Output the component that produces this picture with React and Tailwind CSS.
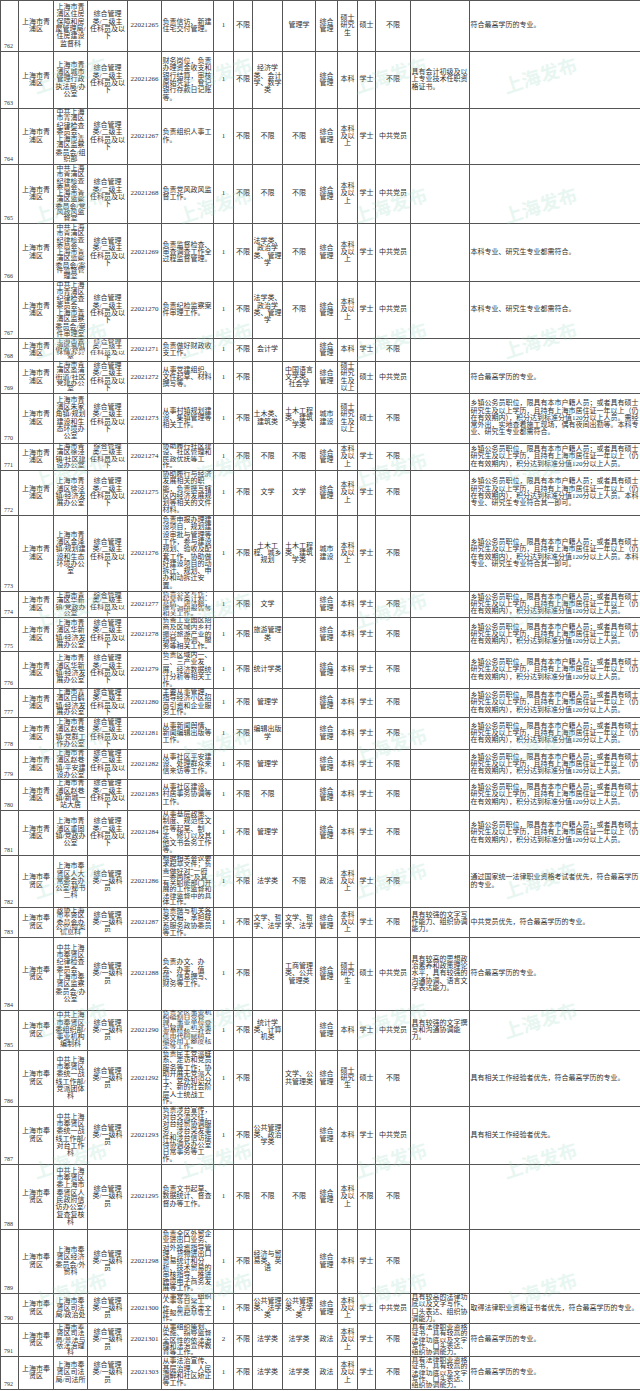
import React, { useLayoutEffect, useRef, useState } from "react";

const QP = "上海市青浦区";
const FX = "上海市奉贤区";
const JW = "中共上海市青浦区纪律检查委员会、上海市青浦区监察委员会/";
const S =
  "乡镇公务员职位，限具有本市户籍人员；或者具有硕士研究生及以上学历，且持有上海市居住证一年以上（仍在有效期内），积分达到标准分值120分以上人员。";
const S1 = S + "本科专业、研究生专业符合其一即可。";
const FL = "具有法律职业资格证书，具有较高的法律功底以及文字写作、口头表达、组织协调能力。";

// h = row height in px, read off the screenshot
const rows = [
  { n: 762, h: 51, d: QP, u: "上海市青浦区住房保障和房屋管理局/住房建设监督科", c: "22021265", desc: "负责信访、新建住宅交付管理。", m1: "", m2: "管理学", cat: "综合管理", edu: "硕士研究生", deg: "硕士", pol: "不限", o: "", r: "符合最高学历的专业。" },
  { n: 763, h: 57, d: QP, u: "上海市青浦区城市管理行政执法局/办公室", c: "22021266", desc: "财务岗位，负责办理资金收支和银行结算，审核原始凭证，登记银行存款日记账等。", m1: "经济学类、会计学、数学类", m2: "", cat: "综合管理", edu: "本科", deg: "学士", pol: "不限", o: "具有会计初级及以上专业技术任职资格证书。", r: "" },
  { n: 764, h: 56, d: QP, u: JW + "组织部", c: "22021267", desc: "负责组织人事工作。", m1: "不限", m2: "不限", cat: "综合管理", edu: "本科及以上", deg: "学士", pol: "中共党员", o: "", r: "" },
  { n: 765, h: 59, d: QP, u: JW + "党风政风监督室", c: "22021268", desc: "负责党风政风监督工作。", m1: "不限", m2: "不限", cat: "综合管理", edu: "本科及以上", deg: "学士", pol: "中共党员", o: "", r: "" },
  { n: 766, h: 58, d: QP, u: JW + "案件监督管理室", c: "22021269", desc: "负责监督检查、审查调查工作全过程监督管理。", m1: "法学类、政治学类、管理学", m2: "不限", cat: "综合管理", edu: "本科及以上", deg: "学士", pol: "中共党员", o: "", r: "本科专业、研究生专业都需符合。" },
  { n: 767, h: 57, d: QP, u: JW + "案件审理室", c: "22021270", desc: "负责纪检监察案件审理工作。", m1: "法学类、政治学类、管理学", m2: "不限", cat: "综合管理", edu: "本科及以上", deg: "学士", pol: "中共党员", o: "", r: "本科专业、研究生专业都需符合。" },
  { n: 768, h: 23, d: QP, u: "上海市青浦区夏阳街道/营商环境办公室", c: "22021271", desc: "负责做好财政收支工作。", m1: "会计学", m2: "", cat: "综合管理", edu: "本科", deg: "学士", pol: "不限", o: "", r: "" },
  { n: 769, h: 32, d: QP, u: "上海市青浦区盈浦街道/社区党建办公室", c: "22021272", desc: "从事党建组织、文件起草、材料撰写等。", m1: "", m2: "中国语言文学类、社会学", cat: "综合管理", edu: "硕士研究生及以上", deg: "硕士", pol: "中共党员", o: "", r: "符合最高学历的专业。" },
  { n: 770, h: 50, d: QP, u: "上海市青浦区朱家角镇/规划建设和生态环境办公室", c: "22021273", desc: "从事村镇规划建设、集镇管理等相关工作。", m1: "土木类、建筑类", m2: "土木工程类、建筑学类", cat: "城市建设", edu: "硕士研究生及以上", deg: "硕士", pol: "不限", o: "", r: S + "需经常外出，实地查看施工现场，偶有夜间出勤等。本科专业、研究生专业都需符合。" },
  { n: 771, h: 27, d: QP, u: "上海市青浦区徐泾镇/社区建设办公室", c: "22021274", desc: "协助履行社区建设、社区管理和民政优抚等工作。", m1: "不限", m2: "不限", cat: "综合管理", edu: "本科及以上", deg: "学士", pol: "不限", o: "", r: S },
  { n: 772, h: 45, d: QP, u: "上海市青浦区徐泾镇/经济发展办公室", c: "22021275", desc: "协助履行与经济发展相关的职能，负责撰写辖区内经济发展规划等相关的文件材料。", m1: "文学", m2: "文学", cat: "综合管理", edu: "本科及以上", deg: "学士", pol: "不限", o: "", r: S1 },
  { n: 773, h: 76, d: QP, u: "上海市青浦区金泽镇/规划建设和生态环境办公室", c: "22021276", desc: "负责申报办理建设项目，规划建设审批与管理等工作，参与建设规划、验收及配套工作，协助做好建设项目的动拆迁、规划、申办和动拆迁安置。", m1: "土木工程、城乡规划", m2: "土木工程类、建筑学类", cat: "城市建设", edu: "本科及以上", deg: "学士", pol: "不限", o: "", r: S1 },
  { n: 774, h: 26, d: QP, u: "上海市青浦区华新镇/党政办公室", c: "22021277", desc: "负责公文写作；起草各类计划、总结、讲话稿，撰写调研报告等相关工作。", m1: "文学", m2: "", cat: "综合管理", edu: "本科", deg: "学士", pol: "不限", o: "", r: S },
  { n: 775, h: 34, d: QP, u: "上海市青浦区华新镇/经济发展办公室", c: "22021278", desc: "负责工业园区招商及区域内乡村振兴旅游产业的指导、协调、服务等相关工作。", m1: "旅游管理类", m2: "", cat: "综合管理", edu: "本科", deg: "学士", pol: "不限", o: "", r: S },
  { n: 776, h: 37, d: QP, u: "上海市青浦区华新镇/经济发展办公室", c: "22021279", desc: "负责区域内一、二、三产业发展，经济数据统计分析等相关工作。", m1: "统计学类", m2: "", cat: "综合管理", edu: "本科", deg: "学士", pol: "不限", o: "", r: S },
  { n: 777, h: 29, d: QP, u: "上海市青浦区白鹤镇/经济发展办公室", c: "22021280", desc: "主要从事管理，指导经济小区招商引资和企业服务工作。", m1: "管理学", m2: "", cat: "综合管理", edu: "本科", deg: "学士", pol: "不限", o: "", r: S },
  { n: 778, h: 32, d: QP, u: "上海市青浦区赵巷镇/党群工作办公室", c: "22021281", desc: "从事新闻舆情、新闻编辑出版等工作。", m1: "编辑出版学", m2: "", cat: "综合管理", edu: "本科", deg: "学士", pol: "不限", o: "", r: S },
  { n: 779, h: 30, d: QP, u: "上海市青浦区赵巷镇/平安建设办公室", c: "22021282", desc: "从事社区平安建设、处理群众来信来访等工作。", m1: "管理学", m2: "", cat: "综合管理", edu: "本科", deg: "学士", pol: "不限", o: "", r: S },
  { n: 780, h: 31, d: QP, u: "上海市青浦区赵巷镇/新城一站大居", c: "22021283", desc: "从事社区建设、村居事务协调等工作。", m1: "不限", m2: "", cat: "综合管理", edu: "本科", deg: "学士", pol: "不限", o: "", r: S },
  { n: 781, h: 45, d: QP, u: "上海市青浦区重固镇/党政办公室", c: "22021284", desc: "从事基层政策、制度、规范性文件等起草、制定、修订以及其他文书会务工作等。", m1: "管理学", m2: "", cat: "综合管理", edu: "本科", deg: "学士", pol: "不限", o: "", r: S },
  { n: 782, h: 52, d: FX, u: "上海市奉贤区人大常委会办公室/秘书二科", c: "22021286", desc: "根据相关会议要求起草文件；负责做好对“一府一委两院”及其有关职能部门开展的工作监督和法律监督中的具体工作。", m1: "法学类", m2: "不限", cat: "政法", edu: "本科及以上", deg: "学士", pol: "不限", o: "", r: "通过国家统一法律职业资格考试者优先，符合最高学历的专业。" },
  { n: 783, h: 30, d: FX, u: "政协上海市奉贤区委员会办公室/提案信息科", c: "22021287", desc: "负责撰写机关各类文稿，承担联系服务政协委员等工作。", m1: "文学、哲学、法学", m2: "文学、哲学、法学", cat: "综合管理", edu: "本科及以上", deg: "学士", pol: "不限", o: "具有较强的文字写作能力、组织协调能力。", r: "中共党员优先，符合最高学历的专业。" },
  { n: 784, h: 73, d: FX, u: "中共上海市奉贤区纪律检查委员会、上海市奉贤区监察委员会/办公室", c: "22021288", desc: "负责办文、办会、办事，值班、信息撰写、财务等工作。", m1: "", m2: "工商管理类、公共管理类", cat: "综合管理", edu: "硕士研究生", deg: "硕士", pol: "中共党员", o: "具有较高的思想政治素养和政策理论水平，具有较强的沟通协调、语言文字表达能力。", r: "符合最高学历的专业。" },
  { n: 785, h: 40, d: FX, u: "中共上海市奉贤区委组织部/事业机构编制科", c: "22021290", desc: "负责全区事业机构编制日常管理，事业单位登记管理，机关事业单位统一社会信用代码赋码，编外用工额度核定等工作。", m1: "统计学类、计算机类", m2: "", cat: "综合管理", edu: "本科", deg: "学士", pol: "中共党员", o: "具有较强的文字撰写和沟通协调能力。", r: "" },
  { n: 786, h: 56, d: FX, u: "中共上海市奉贤区委统一战线工作部/党派团体科", c: "22021292", desc: "负责民主党派联系、走访和党员服务等工作；协助开展无党派人士、党外知识分子、新的社会阶层人士统战工作。", m1: "", m2: "文学、公共管理类", cat: "综合管理", edu: "硕士研究生", deg: "硕士", pol: "不限", o: "", r: "具有相关工作经验者优先，符合最高学历的专业。" },
  { n: 787, h: 58, d: FX, u: "中共上海市奉贤区委统一战线工作部/对台工作科", c: "22021293", desc: "负责涉台宣传，对台交流交往，对台经贸协调服务，涉台突发事件和涉台信访接待协调及办公室日常事务等工作。", m1: "公共管理类、政治学类", m2: "", cat: "综合管理", edu: "本科", deg: "学士", pol: "中共党员", o: "", r: "具有相关工作经验者优先。" },
  { n: 788, h: 65, d: FX, u: "中共上海市奉贤区委上海市奉贤区人民政府信访办公室/复查复核科", c: "22021295", desc: "负责文书起草、数据统计、督查督办等工作。", m1: "不限", m2: "不限", cat: "综合管理", edu: "本科及以上", deg: "不限", pol: "不限", o: "", r: "" },
  { n: 789, h: 64, d: FX, u: "上海市奉贤区经济委员会/外贸科", c: "22021298", desc: "负责全区外贸企业进出口业务、对外投资指导管理，货物进出口贸易统计和分析、技术贸易的审核指导，推进跨境电子商务发展等工作。", m1: "经济与贸易类、英语", m2: "", cat: "综合管理", edu: "本科", deg: "学士", pol: "不限", o: "", r: "" },
  { n: 790, h: 30, d: FX, u: "上海市奉贤区司法局/政治处", c: "22021300", desc: "从事党务、组织人事等日常工作，负责各类文件报告起草等工作。", m1: "公共管理类、法学类", m2: "公共管理类、法学类", cat: "综合管理", edu: "本科及以上", deg: "学士", pol: "中共党员", o: "具有较高的法律功底以及文字写作、口头表达、组织协调能力。", r: "取得法律职业资格证书者优先，符合最高学历的专业。" },
  { n: 791, h: 33, d: FX, u: "上海市奉贤区司法局/普法与依法治理科", c: "22021301", k: "2", desc: "从事组织策划、实施、指导监督全区性的依法治理和法治宣传教育等工作。", m1: "法学类", m2: "法学类", cat: "政法", edu: "本科及以上", deg: "学士", pol: "不限", o: FL, r: "符合最高学历的专业。" },
  { n: 792, h: 33, d: FX, u: "上海市奉贤区司法局/司法所", c: "22021303", desc: "从事法治宣传、基层治理、人民调解和社区矫正等工作。", m1: "法学类", m2: "法学类", cat: "政法", edu: "本科及以上", deg: "学士", pol: "不限", o: FL, r: "符合最高学历的专业。" },
];

const marks = [];
[75, 205, 340, 470, 610, 745, 880, 1020, 1160, 1290].forEach((y) =>
  [70, 215, 390, 540].forEach((x) => marks.push([x, y]))
);

// squeezes its text vertically when it is taller than the row
function Fit({ h, align = "items-center", className = "", children }) {
  const ref = useRef(null);
  const [s, setS] = useState(1);
  useLayoutEffect(() => {
    const el = ref.current;
    if (!el) return;
    const ch = el.offsetHeight;
    if (ch > h - 2) setS((h - 2) / ch);
  }, [h]);
  return (
    <div className={"flex " + align} style={{ height: h - 1 }}>
      <div
        ref={ref}
        className={"w-full " + className}
        style={s < 1 ? { transform: `scaleY(${s})` } : undefined}
      >
        {children}
      </div>
    </div>
  );
}

function Td({ h, className = "", pad = "px-[0.5px]", children }) {
  return (
    <td className={"border border-[#555] p-0 align-middle " + pad}>
      <Fit h={h} className={className}>
        {children}
      </Fit>
    </td>
  );
}

function Position({ fx }) {
  if (fx)
    return (
      <>
        综合管理<br />类/一级科<br />员
      </>
    );
  return (
    <>
      综合管理<br />类/二级主<br />任科员及以<br />下
    </>
  );
}

export default function App() {
  return (
    <div className="relative w-[640px] h-[1391px] overflow-hidden bg-white text-[#303030] font-['Liberation_Serif','Noto_Sans_CJK_SC',serif]">
      <table className="w-[640px] table-fixed border-collapse text-[7px] leading-[7.3px]">
        <colgroup>
          <col className="w-[18px]" />
          <col className="w-[35px]" />
          <col className="w-[34px]" />
          <col className="w-[40px]" />
          <col className="w-[34px]" />
          <col className="w-[52px]" />
          <col className="w-[20px]" />
          <col className="w-[19px]" />
          <col className="w-[30px]" />
          <col className="w-[33px]" />
          <col className="w-[22px]" />
          <col className="w-[20px]" />
          <col className="w-[18px]" />
          <col className="w-[35px]" />
          <col className="w-[59px]" />
          <col className="w-[171px]" />
        </colgroup>
        <tbody>
          {rows.map((r) => (
            <tr key={r.n}>
              <td className="border border-[#555] p-0 pl-[3px]">
                <Fit h={r.h} align="items-end" className="text-[6px] leading-[7px] pb-[1px]">
                  {r.n}
                </Fit>
              </td>
              <Td h={r.h} className="text-center">{r.d}</Td>
              <Td h={r.h} className="text-center">{r.u}</Td>
              <Td h={r.h} pad="px-0" className="text-center">
                <Position fx={r.d === FX} />
              </Td>
              <Td h={r.h} className="text-center">{r.c}</Td>
              <Td h={r.h} className="text-left">{r.desc}</Td>
              <Td h={r.h} className="text-center">{r.k || "1"}</Td>
              <Td h={r.h} className="text-center">不限</Td>
              <Td h={r.h} className="text-center">{r.m1}</Td>
              <Td h={r.h} className="text-center">{r.m2}</Td>
              <Td h={r.h} className="text-center">{r.cat}</Td>
              <Td h={r.h} className="text-center">{r.edu}</Td>
              <Td h={r.h} pad="px-0" className="text-center">{r.deg}</Td>
              <Td h={r.h} className="text-center">{r.pol}</Td>
              <Td h={r.h} className="text-left">{r.o}</Td>
              <Td h={r.h} className="text-left">{r.r}</Td>
            </tr>
          ))}
        </tbody>
      </table>
      <div className="pointer-events-none absolute inset-0">
        {marks.map(([x, y]) => (
          <span
            key={x + "-" + y}
            className="absolute -translate-x-1/2 -translate-y-1/2 -rotate-[18deg] whitespace-nowrap text-[19px] font-bold text-[#8fd6bb] opacity-20 font-['Noto_Sans_CJK_SC',sans-serif]"
            style={{ left: x, top: y }}
          >
            上海发布
          </span>
        ))}
      </div>
    </div>
  );
}
